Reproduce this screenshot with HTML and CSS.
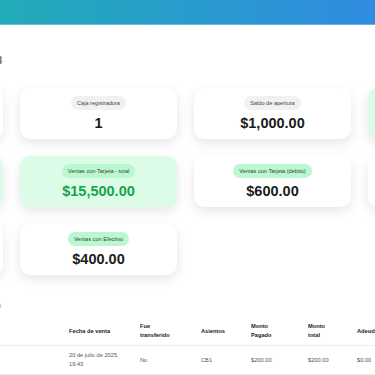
FILE: index.html
```html
<!DOCTYPE html>
<html lang="es">
<head>
    <meta charset="UTF-8">
    <meta name="viewport" content="width=device-width, initial-scale=1.0">
    <title>Cierre de caja</title>
    <link rel="stylesheet" href="styles.css">
</head>
<body>

    <div class="topbar"></div>

    <div class="page">
        <h2 class="page-title">Cierre #8</h2>

        <div class="stats">
            <div class="stat">
                <span class="stat-label">Empleado</span>
                <span class="stat-value">Juan</span>
            </div>
            <div class="stat">
                <span class="stat-label">Caja registradora</span>
                <span class="stat-value">1</span>
            </div>
            <div class="stat">
                <span class="stat-label">Saldo de apertura</span>
                <span class="stat-value">$1,000.00</span>
            </div>
            <div class="stat stat-green">
                <span class="stat-label">Ventas totales</span>
                <span class="stat-value">$16,500.00</span>
            </div>

            <div class="stat stat-green">
                <span class="stat-label">Ventas con Tarjeta (credito)</span>
                <span class="stat-value">$14,900.00</span>
            </div>
            <div class="stat stat-green">
                <span class="stat-label">Ventas con Tarjeta - total</span>
                <span class="stat-value">$15,500.00</span>
            </div>
            <div class="stat">
                <span class="stat-label pill-green">Ventas con Tarjeta (debito)</span>
                <span class="stat-value">$600.00</span>
            </div>
            <div class="stat">
                <span class="stat-label pill-green">Transferencias</span>
                <span class="stat-value">$0.00</span>
            </div>

            <div class="stat">
                <span class="stat-label">Saldo de cierre</span>
                <span class="stat-value">$1,400.00</span>
            </div>
            <div class="stat">
                <span class="stat-label pill-green">Ventas con Efectivo</span>
                <span class="stat-value">$400.00</span>
            </div>
        </div>

        <h3 class="section-title">Ventas del turno</h3>

        <table class="sales">
            <colgroup>
                <col style="width: 120px">
                <col style="width: 93px">
                <col style="width: 71px">
                <col style="width: 61px">
                <col style="width: 50px">
                <col style="width: 57px">
                <col style="width: 49px">
                <col style="width: 80px">
            </colgroup>
            <thead>
                <tr>
                    <th>Cliente</th>
                    <th>ID</th>
                    <th>Fecha de venta</th>
                    <th>Fue transferido</th>
                    <th>Asientos</th>
                    <th>Monto Pagado</th>
                    <th>Monto total</th>
                    <th>Adeudado</th>
                </tr>
            </thead>
            <tbody>
                <tr>
                    <td>Maria</td>
                    <td>41</td>
                    <td>20 de julio de 2025, 19:43</td>
                    <td>No</td>
                    <td>CB1</td>
                    <td>$200.00</td>
                    <td>$200.00</td>
                    <td>$0.00</td>
                </tr>
            </tbody>
        </table>
    </div>

</body>
</html>
```

FILE: styles.css
```css
html, body {
    margin: 0;
    padding: 0;
    background: #fff;
    font-family: 'Liberation Sans', Arial, sans-serif;
    overflow: hidden;
}
.topbar {
    height: 24px;
    background: linear-gradient(to right, #22abb8, #2f8ce1);
    border-bottom: 1px solid rgba(255, 255, 255, 0.3);
}
.page {
    margin-left: -154px;
    width: 700px;
}
.page-title {
    width: 156px;
    margin: 30px 0 0 0;
    text-align: right;
    font-size: 10px;
    line-height: 12px;
    font-weight: 600;
    color: #666;
}

/* tarjetas de resumen */
.stats {
    display: grid;
    grid-template-columns: repeat(4, 157px);
    gap: 17px;
    margin-top: 21px;
}
.stat {
    height: 51px;
    box-sizing: border-box;
    padding: 8px 8px 7px;
    background: #fff;
    border-radius: 10px;
    box-shadow: 0 4px 12px rgba(0, 0, 0, 0.1);
    display: flex;
    flex-direction: column;
    align-items: center;
    gap: 4px;
}
.stat-green {
    background: #dcfce7;
}
.stat-label {
    height: 14px;
    line-height: 14px;
    padding: 0 6px;
    border-radius: 999px;
    background: #f1f1f1;
    color: #444;
    font-size: 5.6px;
    white-space: nowrap;
}
.stat-green .stat-label, .pill-green {
    background: #bbf7d0;
    color: #2e4636;
}
.stat-value {
    font-size: 14.5px;
    line-height: 18px;
    font-weight: bold;
    color: #1b1b1b;
}
.stat-green .stat-value {
    color: #16a34a;
}

.section-title {
    width: 155px;
    margin: 25px 0 0 0;
    text-align: right;
    font-size: 10px;
    line-height: 12px;
    font-weight: 600;
    color: #8ec5f0;
}

/* tabla de ventas */
.sales {
    margin-top: 5px;
    border-collapse: collapse;
    table-layout: fixed;
    font-size: 5.7px;
    line-height: 9px;
}
.sales th, .sales td {
    padding: 5px 10px;
    text-align: left;
    vertical-align: middle;
    border-bottom: 1px solid #eeeeee;
}
.sales th {
    font-weight: bold;
    color: #222;
}
.sales td {
    color: #555;
}
```
